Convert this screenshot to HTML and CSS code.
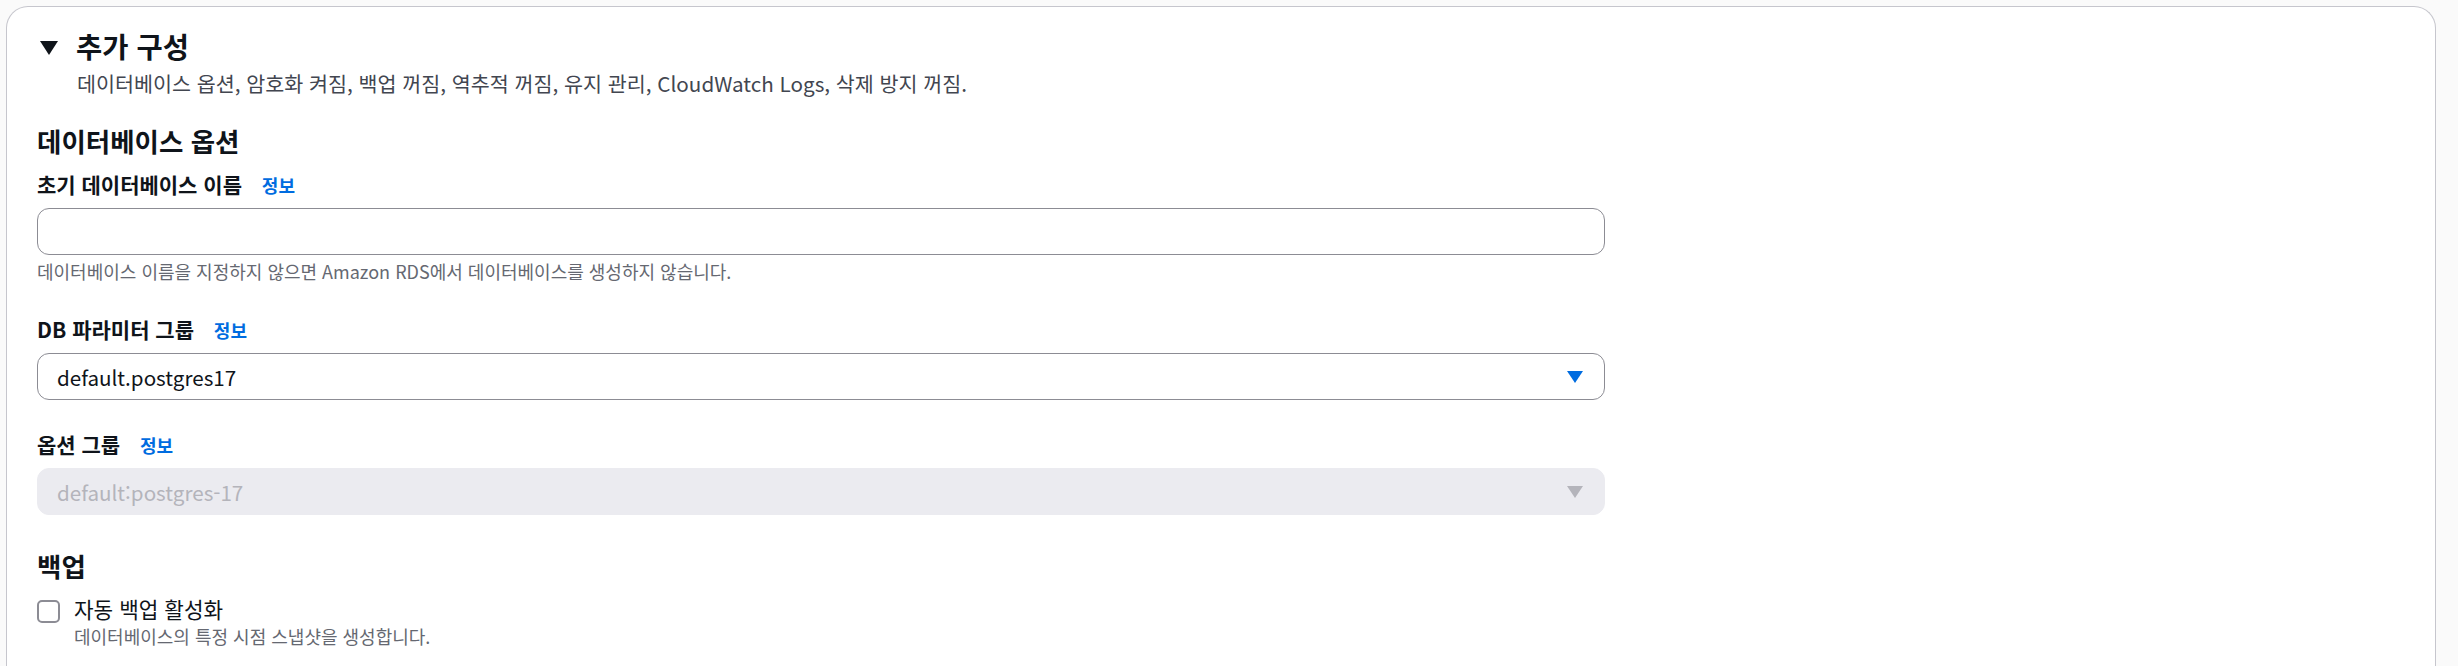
FILE: index.html
```html
<!DOCTYPE html>
<html lang="ko">
<head>
<meta charset="utf-8">
<title>추가 구성</title>
<link rel="stylesheet" href="styles.css">
</head>
<body>
<div class="page">
  <section class="container">
    <div class="header">
      <svg class="caret" width="18" height="14" viewBox="0 0 18 14"><polygon points="0,0 18,0 9,14" fill="#0f141a"/></svg>
      <h2 class="title">추가 구성</h2>
    </div>
    <p class="desc">데이터베이스 옵션, 암호화 켜짐, 백업 꺼짐, 역추적 꺼짐, 유지 관리, CloudWatch Logs, 삭제 방지 꺼짐.</p>

    <h3 class="section-title first">데이터베이스 옵션</h3>

    <div class="field">
      <div class="label label-first">초기 데이터베이스 이름 <a class="info">정보</a></div>
      <div class="input"></div>
      <div class="help">데이터베이스 이름을 지정하지 않으면 Amazon RDS에서 데이터베이스를 생성하지 않습니다.</div>
    </div>

    <div class="field">
      <div class="label label-after-help">DB 파라미터 그룹 <a class="info">정보</a></div>
      <div class="select">
        <span class="select-text">default.postgres17</span>
        <svg class="arrow" width="16" height="12" viewBox="0 0 16 12"><polygon points="0,0 16,0 8,12" fill="#006ce0"/></svg>
      </div>
    </div>

    <div class="field">
      <div class="label label-after-select">옵션 그룹 <a class="info">정보</a></div>
      <div class="select disabled">
        <span class="select-text">default:postgres-17</span>
        <svg class="arrow" width="16" height="12" viewBox="0 0 16 12"><polygon points="0,0 16,0 8,12" fill="#b4b4bb"/></svg>
      </div>
    </div>

    <h3 class="section-title second">백업</h3>

    <div class="checkbox-row">
      <span class="checkbox"></span>
      <div class="checkbox-text">
        <div class="checkbox-label">자동 백업 활성화</div>
        <div class="checkbox-desc">데이터베이스의 특정 시점 스냅샷을 생성합니다.</div>
      </div>
    </div>
  </section>
</div>
</body>
</html>
```

FILE: styles.css
```css
html, body {
  margin: 0;
  padding: 0;
  background: #fafafa;
  font-family: "Noto Sans CJK KR", "Noto Sans", sans-serif;
  color: #0f141a;
}

.page {
  padding: 6px 22px 0 6px;
  height: 660px;
  overflow: hidden;
}

.container {
  background: #ffffff;
  border: 1px solid #c6c6cd;
  border-bottom: none;
  border-radius: 22px 22px 0 0;
  padding: 22px 30px 40px 30px;
  min-height: 700px;
  box-sizing: border-box;
}

.header {
  display: flex;
  align-items: center;
  height: 34px;
}

.caret {
  margin-left: 3px;
  margin-right: 18px;
  margin-top: 3px;
  flex: none;
}

.title {
  margin: 0;
  font-size: 28.5px;
  line-height: 34px;
  font-weight: 700;
}

.desc {
  margin: 6px 0 0 40px;
  font-size: 20.65px;
  line-height: 28px;
  color: #424650;
}

.section-title {
  margin: 0;
  font-size: 26.5px;
  line-height: 32px;
  font-weight: 700;
}

.section-title.first { margin-top: 28px; }
.section-title.second { margin-top: 35px; }

.label {
  font-size: 21px;
  line-height: 28px;
  font-weight: 700;
}

.label-first { margin-top: 13px; }
.label-after-help { margin-top: 32px; }
.label-after-select { margin-top: 30px; }

.info {
  margin-left: 14px;
  font-size: 18px;
  font-weight: 700;
  color: #006ce0;
}

.input,
.select {
  margin-top: 9px;
  width: 1568px;
  height: 47px;
  box-sizing: border-box;
  border: 1px solid #8c8c94;
  border-radius: 12px;
  background: #ffffff;
}

.select {
  display: flex;
  align-items: center;
  justify-content: space-between;
  padding: 0 21px 0 19px;
}

.select-text {
  font-size: 20.6px;
  line-height: 28px;
  color: #0f141a;
}

.select.disabled {
  background: #ebebf0;
  border-color: #ebebf0;
}

.select.disabled .select-text {
  color: #b4b4bb;
}

.arrow {
  flex: none;
}

.help {
  margin-top: 4px;
  font-size: 18px;
  line-height: 24px;
  color: #656871;
}

.checkbox-row {
  display: flex;
  margin-top: 12px;
}

.checkbox {
  flex: none;
  width: 23px;
  height: 23px;
  box-sizing: border-box;
  border: 2px solid #8c8c94;
  border-radius: 5px;
  margin-top: 6px;
  margin-right: 14px;
  background: #ffffff;
}

.checkbox-label {
  font-size: 21.3px;
  line-height: 30px;
}

.checkbox-desc {
  font-size: 18px;
  line-height: 24px;
  color: #656871;
}
```
